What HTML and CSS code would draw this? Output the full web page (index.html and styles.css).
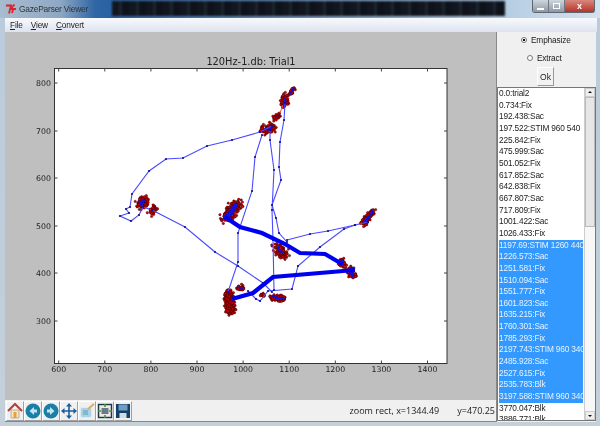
FILE: index.html

```html
<!DOCTYPE html>
<html lang="en">
<head>
    <meta charset="UTF-8">
    <title>GazeParser Viewer</title>
    <link rel="stylesheet" href="styles.css">
</head>
<body>
    <div class="window">
        <div class="titlebar">
            <span class="backdrop"></span>
            <svg class="tk-icon" width="10" height="10" viewBox="0 0 10 10">
                <path d="M0 1.5h5l-2 8M6 9l1-3-1.500-2 3-3.500M5 5h5" fill="none" stroke="#d8262c" stroke-width="1.800"/>
            </svg>
            <span class="app-title">GazeParser Viewer</span>
            <div class="caption-buttons">
                <span class="cap-btn"><i class="cap-min"></i></span>
                <span class="cap-btn"><i class="cap-max"></i></span>
                <span class="cap-btn cap-close">x</span>
            </div>
        </div>
        <div class="menubar">
            <span><u>F</u>ile</span>
            <span><u>V</u>iew</span>
            <span><u>C</u>onvert</span>
        </div>
        <div class="content">
            <div class="main">
                <div class="canvas">
                    <svg id="plot" width="491" height="369" viewBox="5 32 491 369">
                        <rect x="54.500" y="68.500" width="392.500" height="295" fill="#fff" stroke="#333" stroke-width="1"/>
                        <path id="ticks" fill="none" stroke="#444" stroke-width="1"/>
                        <text class="plot-title" x="251" y="65">120Hz-1.db: Trial1</text>
                        <g class="xlabels">
                            <text x="58.700" y="372">600</text>
                            <text x="104.800" y="372">700</text>
                            <text x="150.900" y="372">800</text>
                            <text x="197" y="372">900</text>
                            <text x="243.100" y="372">1000</text>
                            <text x="289.200" y="372">1100</text>
                            <text x="335.300" y="372">1200</text>
                            <text x="381.400" y="372">1300</text>
                            <text x="427.500" y="372">1400</text>
                        </g>
                        <g class="ylabels">
                            <text x="51" y="86">800</text>
                            <text x="51" y="134">700</text>
                            <text x="51" y="181">600</text>
                            <text x="51" y="229">500</text>
                            <text x="51" y="276">400</text>
                            <text x="51" y="324">300</text>
                        </g>
                        <g id="dots"></g>
                        <g id="scribbles"></g>
                        <path class="red-link" d="M280 113L283 105"/>
                        <g id="thin">
                            <polyline points="152,210 143,207 139,215 131,221 120,216 129,213 126,209 130,207 132,194 149,171 166,159 183,158 207,146 232,140 260,132 272,126"/>
                            <polyline points="262,135 255,157 252,191 238,233 238,262 228,292"/>
                            <polyline points="270,130 270,140 274,170 272,210 273,240 274,290"/>
                            <polyline points="285,103 284,120 280,142 279,167 281,180 272,205 276,218 279,233 287,242"/>
                            <polyline points="287,240 310,234 328,231 355,225 368,222"/>
                            <polyline points="355,225 344,229 320,247 298,266 292,289 268,291 260,301 256,299 248,291"/>
                            <polyline points="152,210 185,227 215,252 238,266 263,283 272,292"/>
                        </g>
                        <polyline class="thick" points="225,217 240,227 262,233 285,244 300,253 325,254 342,264"/>
                        <polyline class="thick" points="355,270 273,277 253,293 232,299"/>
                    </svg>
                </div>
                <div class="toolbar">
                    <span class="tool-btn">
                        <svg width="16" height="17" viewBox="0 0 16 17">
                            <path d="M4 8v8h8V8z" fill="#f3e6cf" stroke="#9a8a70" stroke-width=".6"/>
                            <rect x="6.500" y="10" width="3" height="6" fill="#f0a030"/>
                            <path d="M1 9l7-7 7 7" fill="none" stroke="#b0403a" stroke-width="2"/>
                        </svg>
                    </span>
                    <span class="tool-btn">
                        <svg width="16" height="16" viewBox="0 0 16 16">
                            <circle cx="8" cy="8" r="7.500" fill="#1a7ea6"/>
                            <path d="M9 4L4.500 8 9 12V9.500h3v-3H9z" fill="#bfe6f2"/>
                        </svg>
                    </span>
                    <span class="tool-btn">
                        <svg width="16" height="16" viewBox="0 0 16 16">
                            <circle cx="8" cy="8" r="7.500" fill="#1a7ea6"/>
                            <path d="M7 4l4.500 4L7 12V9.500H4v-3h3z" fill="#bfe6f2"/>
                        </svg>
                    </span>
                    <span class="tool-btn">
                        <svg width="16" height="16" viewBox="0 0 16 16">
                            <path d="M8 1v14M1 8h14" stroke="#1c5f9c" stroke-width="1.600"/>
                            <path d="M8 0l3 3.500H5zM8 16l3-3.500H5zM0 8l3.500-3v6zM16 8l-3.500-3v6z" fill="#1c5f9c"/>
                        </svg>
                    </span>
                    <span class="tool-btn">
                        <svg width="16" height="16" viewBox="0 0 16 16">
                            <rect x="1.500" y="4.500" width="11" height="10" rx="2" fill="#a9d3e2" stroke="#dcecf2"/>
                            <rect x="4" y="7" width="5" height="5" fill="#7fb8d0"/>
                            <path d="M9 6l6-5" stroke="#e0a860" stroke-width="2"/>
                        </svg>
                    </span>
                    <span class="tool-btn">
                        <svg width="16" height="16" viewBox="0 0 16 16">
                            <rect x="1.500" y="1.500" width="13" height="13" fill="#e8e8e8" stroke="#223344" stroke-width="1.400"/>
                            <rect x="4.500" y="5" width="7" height="6" fill="#6c7a88"/>
                            <path d="M8 1v3M8 12v3M1 8h3M12 8h3" stroke="#3c9a3c" stroke-width="1.600"/>
                        </svg>
                    </span>
                    <span class="tool-btn">
                        <svg width="16" height="16" viewBox="0 0 16 16">
                            <rect x="1" y="1" width="14" height="14" fill="#123f6c"/>
                            <rect x="3.500" y="1.500" width="9" height="6" fill="#6f9cc0"/>
                            <rect x="4.500" y="10" width="7" height="5" fill="#d0dbe4"/>
                        </svg>
                    </span>
                    <div class="status">
                        <span>zoom rect, x=1344.49</span>
                        <span>y=470.25</span>
                    </div>
                </div>
            </div>
            <div class="side">
                <div class="options">
                    <label class="radio radio-first"><i class="dot on"></i>Emphasize</label>
                    <label class="radio radio-second"><i class="dot"></i>Extract</label>
                    <button class="ok">Ok</button>
                </div>
                <div class="listwrap">
                    <ul class="events">
                        <li>0.0:trial2</li>
                        <li>0.734:Fix</li>
                        <li>192.438:Sac</li>
                        <li>197.522:STIM 960 540</li>
                        <li>225.842:Fix</li>
                        <li>475.999:Sac</li>
                        <li>501.052:Fix</li>
                        <li>617.852:Sac</li>
                        <li>642.838:Fix</li>
                        <li>667.807:Sac</li>
                        <li>717.809:Fix</li>
                        <li>1001.422:Sac</li>
                        <li>1026.433:Fix</li>
                        <li class="sel">1197.69:STIM 1260 440</li>
                        <li class="sel">1226.573:Sac</li>
                        <li class="sel">1251.581:Fix</li>
                        <li class="sel">1510.094:Sac</li>
                        <li class="sel">1551.777:Fix</li>
                        <li class="sel">1601.823:Sac</li>
                        <li class="sel">1635.215:Fix</li>
                        <li class="sel">1760.301:Sac</li>
                        <li class="sel">1785.293:Fix</li>
                        <li class="sel">2197.743:STIM 960 340</li>
                        <li class="sel">2485.928:Sac</li>
                        <li class="sel">2527.615:Fix</li>
                        <li class="sel">2535.783:Blk</li>
                        <li class="sel">3197.588:STIM 960 340</li>
                        <li>3770.047:Blk</li>
                        <li>3886.771:Blk</li>
                    </ul>
                    <div class="scrollbar">
                        <span class="arrow up"></span>
                        <span class="thumb"></span>
                        <span class="arrow down"></span>
                    </div>
                </div>
            </div>
        </div>
    </div>
    <script src="app.js"></script>
</body>
</html>
```

FILE: styles.css

```css
* {
    box-sizing: border-box;
}
body {
    margin: 0;
    font-family: "Liberation Sans", sans-serif;
    font-size: 8.300px;
    letter-spacing: -.16px;
    overflow: hidden;
}
.window {
    width: 600px;
    height: 426px;
    display: flex;
    flex-direction: column;
    padding: 0 4px 4px 5px;
    background: linear-gradient(#b9cbdc, #c4d0da);
    filter: blur(.35px);
}
.titlebar {
    height: 18px;
    flex: none;
    margin: 0 -4px 0 -5px;
    padding-left: 6px;
    display: flex;
    align-items: center;
    gap: 3px;
    position: relative;
    background: linear-gradient(90deg, #a8bcd0 0, #8ea8c4 60px, #2f66a4 95px, #2a62a2 110px, #b5cde2 505px, #d4e2ee 600px);
}
.backdrop {
    position: absolute;
    left: 112px;
    top: 1px;
    width: 393px;
    height: 15px;
    background: repeating-linear-gradient(90deg, #11161f 0 7px, #1c2530 7px 10px, #0e121a 10px 17px);
    filter: blur(1.200px);
}
.tk-icon {
    flex: none;
}
.app-title {
    color: #333;
    font-size: 8.400px;
    letter-spacing: -.2px;
}
.caption-buttons {
    position: absolute;
    top: 0;
    right: 5px;
    display: flex;
    height: 13px;
    border: 1px solid #5f6670;
    border-top: 0;
    border-radius: 0 0 3px 3px;
}
.cap-btn {
    width: 16px;
    display: flex;
    align-items: center;
    justify-content: center;
    background: linear-gradient(#cfd6dc, #8c98a4);
    border-right: 1px solid #6f7680;
}
.cap-close {
    width: 29px;
    border-right: 0;
    color: #fff;
    font-size: 9px;
    font-weight: bold;
    line-height: 1;
    background: linear-gradient(#d9877c, #b5342a);
}
.cap-min {
    width: 7px;
    height: 2px;
    margin-top: 5px;
    background: #fff;
}
.cap-max {
    width: 7px;
    height: 6px;
    border: 1px solid #fff;
}
.menubar {
    height: 14px;
    flex: none;
    display: flex;
    align-items: center;
    gap: 8px;
    padding-left: 5px;
    color: #222;
    background: linear-gradient(#f8f9fc, #dde3f0);
    margin-right: -1px;
}
.content {
    flex: 1;
    display: flex;
    min-height: 0;
}
.main {
    width: 491px;
    display: flex;
    flex-direction: column;
}
.canvas {
    flex: 1;
    background: #bfbfbf;
    min-height: 0;
}
#plot {
    display: block;
}
#plot text {
    font-family: "DejaVu Sans", sans-serif;
    letter-spacing: 0;
    fill: #222;
}
.plot-title {
    font-size: 9.800px;
    text-anchor: middle;
}
.xlabels text {
    font-size: 7.800px;
    text-anchor: middle;
}
.ylabels text {
    font-size: 7.800px;
    text-anchor: end;
}
#thin polyline {
    fill: none;
    stroke: #4a4aff;
    stroke-width: 1.100;
}
.thick {
    fill: none;
    stroke: #0000f0;
    stroke-width: 4.200;
}
.red-link {
    fill: none;
    stroke: #f44;
}
.toolbar {
    height: 22px;
    flex: none;
    display: flex;
    align-items: center;
    padding-left: 1px;
    background: #f0f0f0;
    border-bottom: 1px solid #888;
}
.tool-btn {
    width: 18px;
    height: 20px;
    display: flex;
    align-items: center;
    justify-content: center;
    background: #f0f0f0;
    border: 1px solid;
    border-color: #fff #a0a0a0 #a0a0a0 #fff;
}
.status {
    margin-left: auto;
    display: flex;
    gap: 18px;
    padding-right: 1px;
    color: #222;
    font-family: "Open Sans", sans-serif;
    font-size: 9px;
    letter-spacing: 0;
}
.side {
    width: 100px;
    display: flex;
    flex-direction: column;
    background: #f0f0f0;
    border-left: 1px solid #888;
}
.options {
    height: 55px;
    flex: none;
    display: flex;
    flex-direction: column;
    align-items: flex-start;
    color: #222;
}
.radio {
    display: flex;
    align-items: center;
    gap: 4px;
    height: 13px;
}
.radio-first {
    margin: 1px 0 0 24px;
}
.radio-second {
    margin: 5px 0 0 30px;
}
.dot {
    width: 6px;
    height: 6px;
    border: 1px solid #777;
    border-radius: 50%;
    background: #fff;
}
.dot.on {
    background: radial-gradient(circle, #111 0 45%, #fff 55%);
}
.ok {
    width: 17px;
    height: 19px;
    margin: 3px 0 0 40px;
    padding: 0;
    font: inherit;
    font-size: 8.500px;
    color: #222;
    background: #f2f2f2;
    border: 1px solid;
    border-color: #fff #999 #999 #fff;
}
.listwrap {
    flex: 1;
    min-height: 0;
    display: flex;
    margin-bottom: 1px;
    border: 1px solid #777;
    background: #fff;
}
.events {
    flex: 1;
    min-width: 0;
    list-style: none;
    margin: 0;
    padding: 0 1px;
    overflow: hidden;
    color: #222;
    white-space: nowrap;
}
.events li {
    height: 11.670px;
    line-height: 11.670px;
}
.events .sel {
    background: #3399ff;
    color: #e6f2ff;
}
.scrollbar {
    width: 11px;
    flex: none;
    display: flex;
    flex-direction: column;
    background: #f7f7f7;
    border-left: 1px solid #ccc;
}
.arrow {
    height: 9px;
    flex: none;
    display: flex;
    align-items: center;
    justify-content: center;
    background: #eee;
    border: 1px solid #ccc;
}
.arrow::before {
    content: "";
    border: 2.500px solid transparent;
}
.up::before {
    border-bottom-color: #111;
    margin-bottom: 3px;
}
.down::before {
    border-top-color: #111;
    margin-top: 3px;
}
.thumb {
    height: 130px;
    flex: none;
    background: #e6e6e6;
    border: 1px solid #bbb;
}
.down {
    margin-top: auto;
}
```

FILE: app.js

```js
// ticks on all four sides of the axes
const xTicks = [58.7, 104.8, 150.9, 197, 243.1, 289.2, 335.3, 381.4, 427.5];
const yTicks = [83, 131, 178, 226, 273, 321];
let d = "";
xTicks.forEach(x => {
    d += `M${x} 68.5v3M${x} 363.5v-3`;
});
yTicks.forEach(y => {
    d += `M54.5 ${y}h3M447 ${y}h-3`;
});
document.getElementById("ticks").setAttribute("d", d);

// fixation clusters: from x,y to x,y, spread, red dots, blue amount
const clusters = [
    [140, 205, 145, 200, 3.4, 110, 14],
    [151, 213, 155, 207, 2.4, 55, 1],
    [225, 219, 238, 203, 4.2, 240, 34],
    [264, 130, 272, 128, 3.6, 100, 10],
    [274, 119, 279, 115, 2, 36, 2],
    [284, 106, 285, 97, 2.8, 70, 10],
    [290, 95, 294, 87, 1.6, 30, 8],
    [362, 225, 373, 211, 2.6, 90, 14],
    [342, 260, 342, 265, 3, 28, 30],
    [349, 268, 354, 277, 2.8, 70, 22],
    [277, 246, 284, 256, 3.8, 130, 8],
    [228, 292, 231, 312, 3.6, 240, 1],
    [238, 287, 243, 289, 2, 36, 4],
    [260, 295, 264, 295, 1.2, 14, 1],
    [272, 297, 284, 300, 2.8, 90, 8]
];

let seed = 7;
function rnd() {
    seed = (seed * 16807) % 2147483647;
    return seed / 2147483647;
}
function gauss() {
    return (rnd() + rnd() + rnd() - 1.5) / 0.8;
}

let dots = "";
let scribbles = "";
clusters.forEach(([x1, y1, x2, y2, s, red, blue]) => {
    for (let i = 0; i < red; i++) {
        const t = rnd();
        const x = (x1 + (x2 - x1) * t + gauss() * s).toFixed(1);
        const y = (y1 + (y2 - y1) * t + gauss() * s).toFixed(1);
        dots += `<circle cx="${x}" cy="${y}" r="1.2" fill="#d80000" stroke="#200" stroke-width=".4"/>`;
    }
    let pts = "";
    for (let i = 0; i < blue; i++) {
        const t = rnd();
        const x = (x1 + (x2 - x1) * t + gauss() * s * 0.5).toFixed(1);
        const y = (y1 + (y2 - y1) * t + gauss() * s * 0.5).toFixed(1);
        pts += `${x},${y} `;
    }
    scribbles += `<polyline points="${pts}" fill="none" stroke="#1010e0" stroke-width="1.4"/>`;
});
document.getElementById("dots").innerHTML = dots;
document.getElementById("scribbles").innerHTML = scribbles;

// a small dark marker on every sample of the thin lines
let markers = "";
document.querySelectorAll("#thin polyline").forEach(line => {
    line.getAttribute("points").split(" ").forEach(p => {
        const [x, y] = p.split(",");
        markers += `<circle cx="${x}" cy="${y}" r="1.1" fill="#10108c"/>`;
    });
});
document.getElementById("thin").insertAdjacentHTML("beforeend", markers);
```
